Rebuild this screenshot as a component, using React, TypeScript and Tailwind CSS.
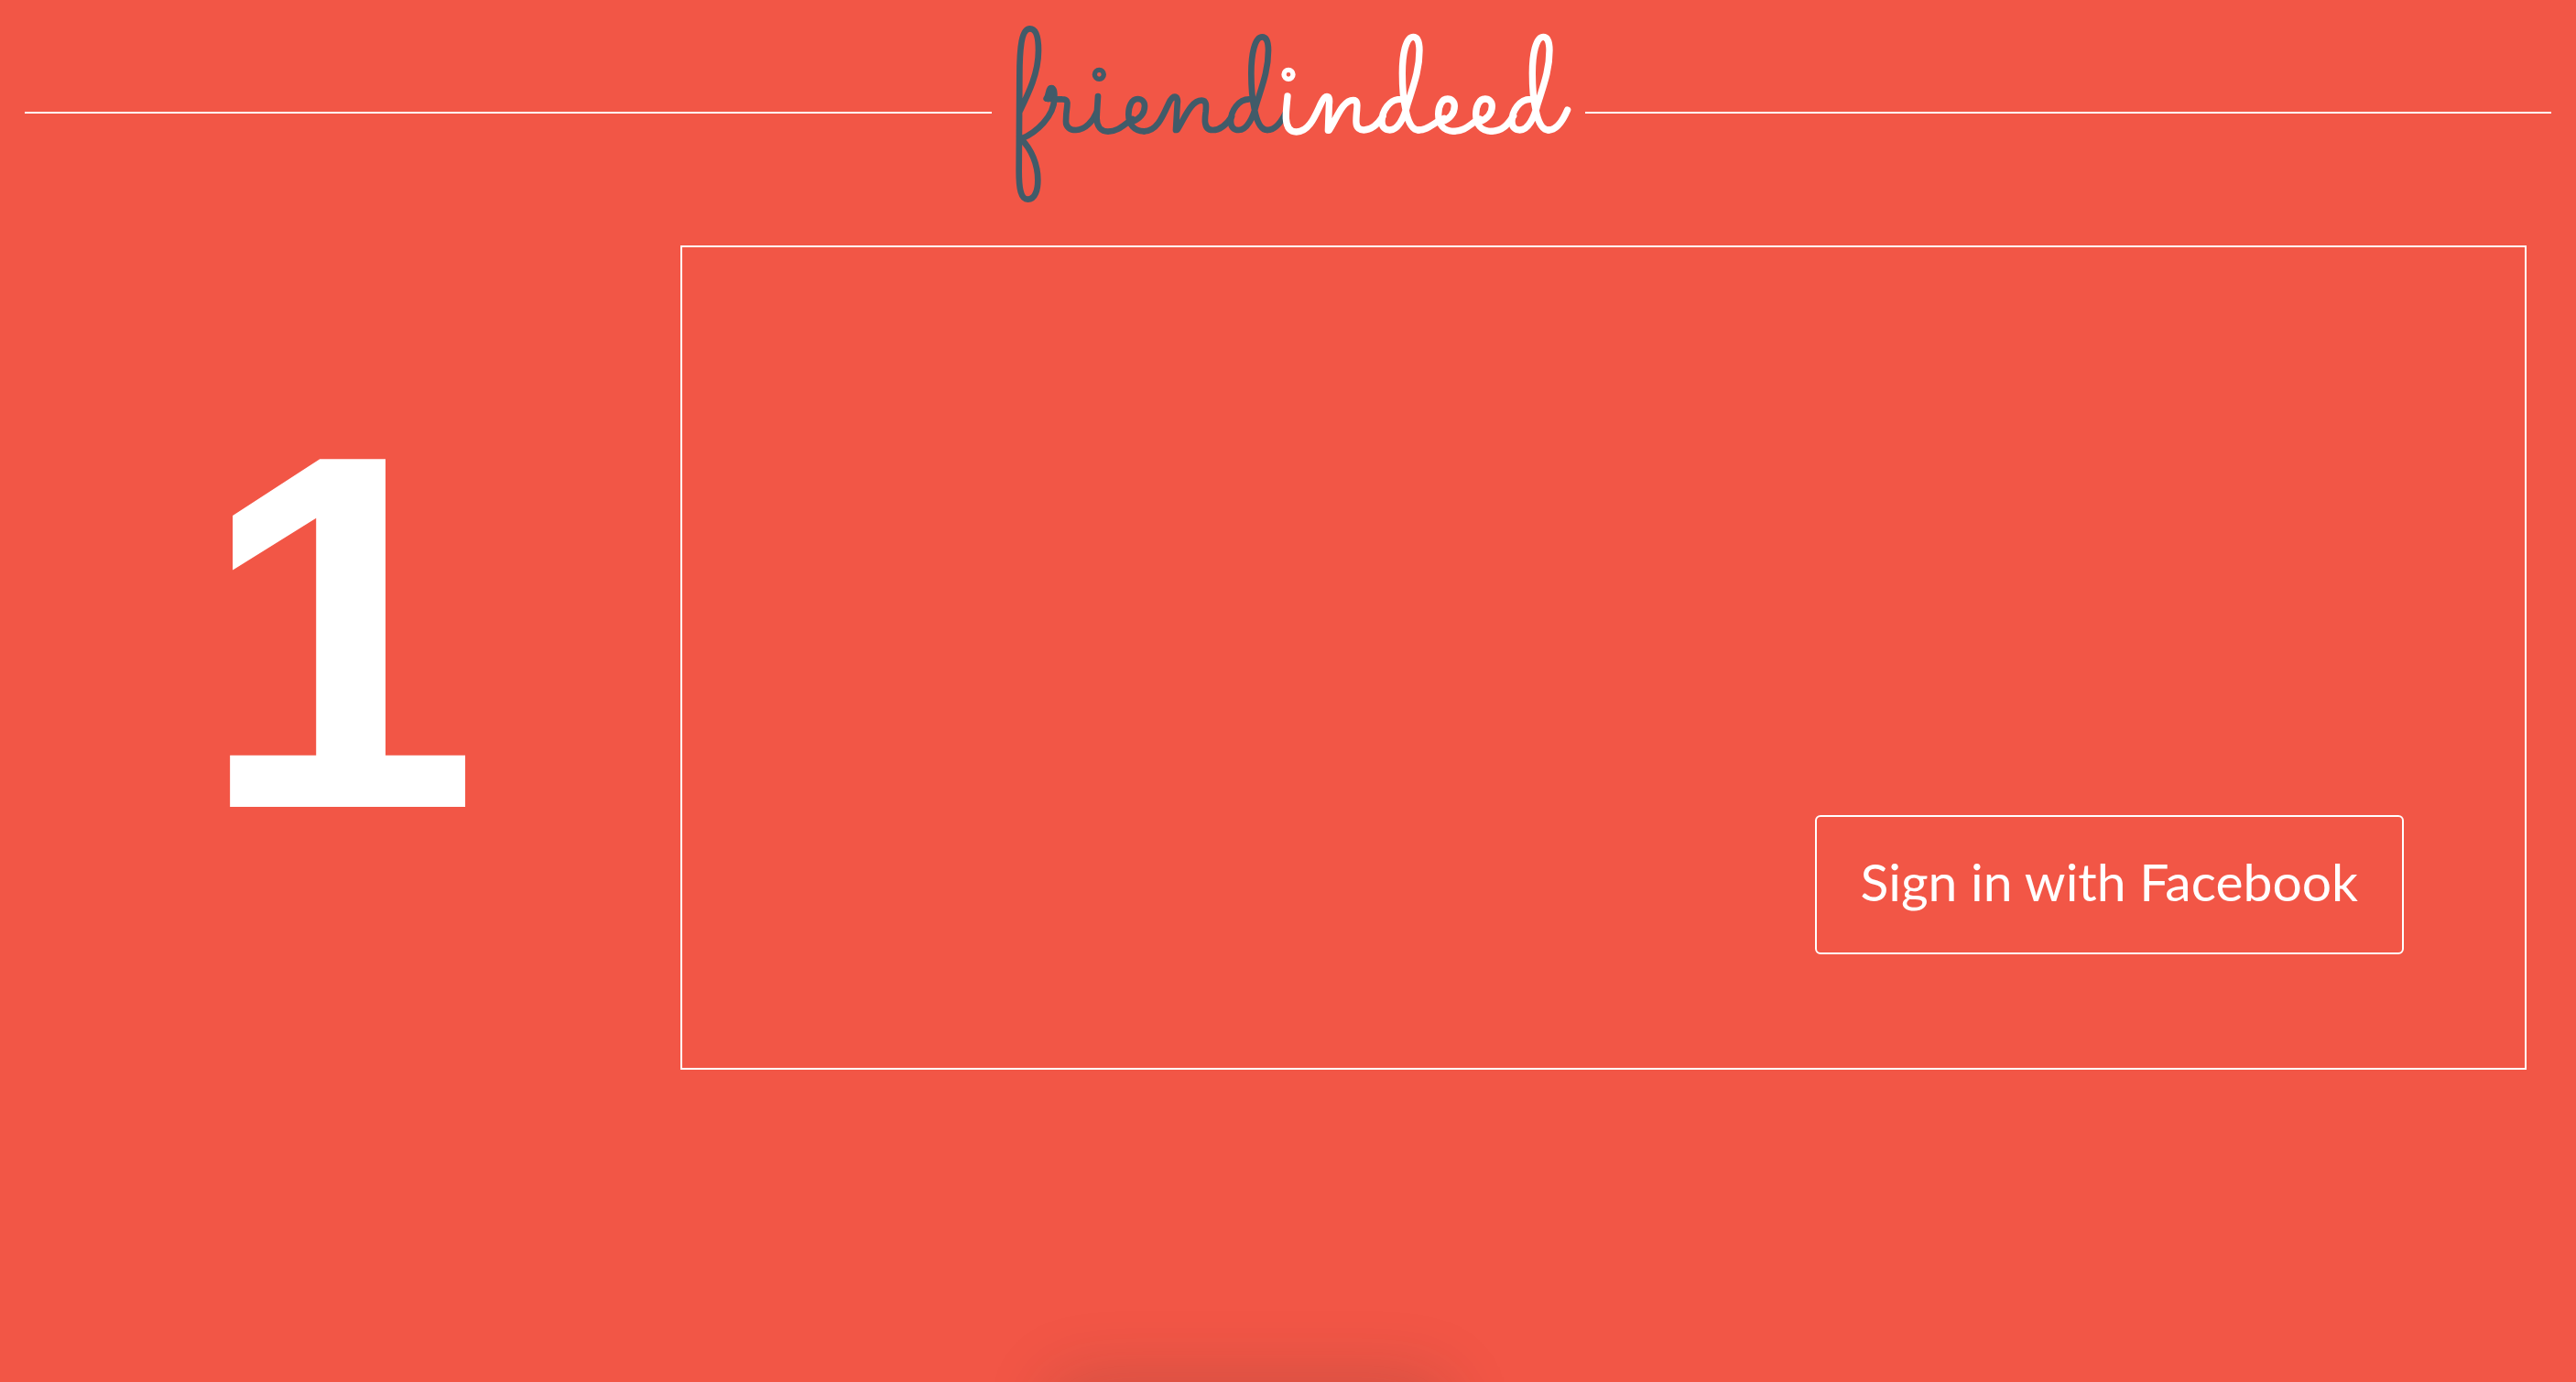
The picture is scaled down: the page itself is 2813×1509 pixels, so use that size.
const D_STROKE =
  'M912 325C878 325 852 362 852 398C852 416 862 426 878 426C905 426 925 385 935 345C955 280 975 230 975 165C975 135 967 121 955 121C930 121 919 180 919 240C919 290 922 325 930 360C938 400 950 426 972 426';
const E_STROKE =
  'M530 398C552 390 570 372 570 347C570 333 560 324 547 324C527 324 517 350 517 374C517 407 535 430 568 430';
const DOT = { cy: 244, r: 15, strokeWidth: 16 };

function Logo() {
  return (
    <svg
      viewBox="69 0 1944 720"
      className="w-[648px] shrink-0"
      fill="none"
      strokeWidth={20}
      strokeLinecap="round"
      strokeLinejoin="round"
      role="img"
      aria-label="friendindeed"
    >
      <g stroke="#415b69">
        <path d="M160 366C190 305 222 240 222 165C222 120 215 94 194 94C168 94 160 150 160 250L158 560C158 620 165 653 187 653C212 653 220 620 220 590C220 540 200 490 165 455C215 435 274 380 274 322C275 302 273 288 264 288C254 288 258 308 248 323L300 325C317 325 318 335 316 347C312 375 312 385 312 398C312 416 325 426 345 426C375 426 402 395 413 367" />
        <path d="M254 323C260 315 266 308 264 290" strokeWidth={22} />
        <path d="M417 315C415 350 413 370 413 388C413 415 428 431 450 431C485 431 505 405 530 390" />
        <path d={E_STROKE} />
        <path d="M568 430C610 430 630 380 648 340C655 325 662 317 668 317C677 317 679 328 677 340L672 426H676C700 390 720 329 757 329C772 329 772 345 770 365C768 380 767 390 768 400C770 420 780 426 793 426C820 426 840 405 855 382" />
        <path d={D_STROKE} />
        <path d="M972 426C997 426 1018 400 1034 365" />
        <circle cx={421} {...DOT} />
      </g>
      <g stroke="#ffffff" strokeWidth={22}>
        <path d="M1038 315C1035 345 1032 370 1033 388C1035 418 1046 432 1067 432C1110 432 1130 375 1148 338C1155 323 1160 316 1167 316C1176 316 1176 330 1174 345L1171 427H1174C1198 390 1218 328 1253 328C1267 328 1267 343 1265 360C1263 380 1262 390 1263 402C1264 420 1275 426 1288 426C1315 426 1335 405 1350 382" />
        <path d={D_STROKE} transform="translate(495 0)" />
        <path d="M1467 426C1500 426 1515 402 1550 388" />
        <path d={E_STROKE} transform="translate(1015 0)" />
        <path d="M1583 430C1625 430 1640 400 1668 390" />
        <path d={E_STROKE} transform="translate(1138 0)" />
        <path d="M1706 430C1745 430 1760 405 1778 380" />
        <path d={D_STROKE} transform="translate(921 0)" />
        <path d="M1893 426C1920 426 1940 395 1955 360" />
        <circle cx={1041} {...DOT} />
      </g>
    </svg>
  );
}

export default function App() {
  return (
    <div className="relative min-h-screen overflow-hidden bg-[#f25646] px-[27px] text-white">
      <header className="flex items-center">
        <span className="mt-1.5 h-0.5 flex-1 bg-white" />
        <h1>
          <Logo />
        </h1>
        <span className="mt-1.5 h-0.5 flex-1 bg-white" />
      </header>

      <main className="mt-7 grid grid-cols-4">
        <div className="pt-28 pr-1 text-center font-['Liberation_Sans',sans-serif] text-[552px] leading-[620px] font-bold">
          1
        </div>
        <section className="col-span-3 mr-[27px] ml-[26px] flex h-[900px] items-end justify-end border-2 border-white pr-[132px] pb-[124px]">
          <button
            type="button"
            className="rounded-md border-2 border-white px-12 pt-7 pb-9 font-[Lato,sans-serif] text-[57px] leading-[84px]"
          >
            Sign in with Facebook
          </button>
        </section>
      </main>

      <div className="absolute top-full left-[41%] h-40 w-[15%] shadow-[0_0_80px_rgba(30,50,50,0.18)]" />
    </div>
  );
}
